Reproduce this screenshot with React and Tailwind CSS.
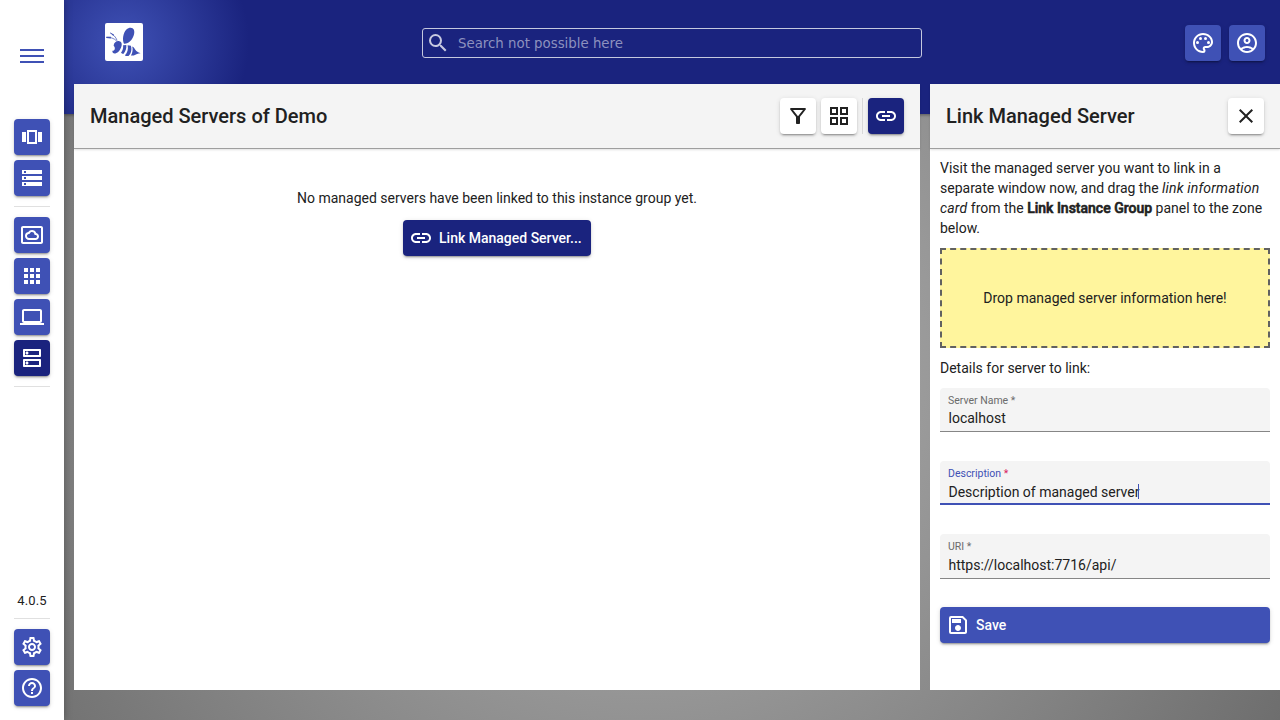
import React from "react";
import {
  MdOutlineViewCarousel, MdStorage, MdOutlineSettingsSystemDaydream, MdApps, MdOutlineComputer,
  MdOutlineDns, MdOutlineSettings, MdHelpOutline, MdSearch, MdOutlineFilterAlt, MdOutlineGridView,
  MdLink, MdOutlinePalette, MdOutlineAccountCircle, MdClose, MdOutlineSave,
} from "react-icons/md";

const shadow = "shadow-[0_3px_1px_-2px_rgba(0,0,0,0.2),0_2px_2px_0_rgba(0,0,0,0.14),0_1px_5px_0_rgba(0,0,0,0.12)]";

const tones = {
  primary: "bg-[#3f51b5] text-white",
  dark: "bg-[#1a237e] text-white",
  light: "bg-white text-[#212121]",
};

function IconButton({ icon: Icon, tone = "primary", label }) {
  return (
    <button aria-label={label} className={`flex size-9 shrink-0 items-center justify-center rounded-[4px] ${tones[tone]} ${shadow}`}>
      <Icon size={24} />
    </button>
  );
}

function Bee() {
  return (
    <svg viewBox="0 0 38 38" className="size-[38px] rounded-[2px] bg-white" fill="#3f51b5">
      <path d="M19 20.8C17.2 17 17.8 10 21.4 6.4c2.6-2.4 6.4-2.4 7.5.3 1.2 3.4-.5 8.2-3.6 11.4-1.8 1.8-4.1 2.9-6.3 2.7z" />
      <path d="M8.6 22.4C9 19.4 11.2 17.8 13.6 17.9c2.6.2 3.6 2.4 3 4.8-.7 3.6-3.3 7-6.2 7.7-2 .4-3.3-.9-3-2.6 1-.1 2-.6 2.3-1.6.4-1.3-.1-2.6-1.1-3.8z" />
      <path d="M18.1 22.2l3.2-.1c.4 3.2-.7 6.5-3 8.8-.9-.1-1.8-.6-2.3-1.2 1.7-2.1 2.4-4.6 2.1-7.5zM22.6 22.2l3.3.6c1.2 3.6.2 7.9-2.4 10.2-1.3.1-2.5-.1-3.7-.6 2.7-2.7 3.7-6.4 2.8-10.2zM27.2 23.6l1.7.8c1.2 2.6 3.1 4.7 6.7 5.9-2.6.1-4.6 1.2-6.8 2.2l-2.9.1c1.7-2.7 2.2-6 1.3-9z" />
      <path d="M1.3 14.4c4-.4 7.6.8 10.4 3.6M5 9.9c3.4 1.6 5.9 4.1 7.1 7.6" fill="none" stroke="#3f51b5" strokeWidth=".7" />
      <path d="M1.4 13.7l4.6.1-.2 1.6-4.5-.3zM5.2 9.4l3.9 2.3-.9 1.4z" />
    </svg>
  );
}

function Field({ label, value, focused }) {
  return (
    <div className={`mb-[28.85px] flex h-[44.3px] flex-col rounded-t-[4px] bg-[#f4f4f4] px-2 pt-[6px] ${focused ? "border-b-2 border-[#3f51b5]" : "border-b border-[#868686]"}`}>
      <div className={`text-[10.5px] leading-[13px] ${focused ? "text-[#3f51b5]" : "text-[#6b6b6b]"}`}>
        {label} <span className={focused ? "text-[#d81b60]" : ""}>*</span>
      </div>
      <div className="mt-[1.4px] flex items-center pl-[0.5px] text-sm leading-5">
        <span>{value}</span>
        {focused && <span className="-ml-[1.5px] h-[15px] w-px bg-[#3f51b5]" />}
      </div>
    </div>
  );
}

export default function App() {
  return (
    <div className="flex h-[720px] w-[1280px] overflow-hidden bg-[radial-gradient(circle_at_center,#b6b6b6_0%,#6e6e6e_100%)] font-['Roboto',sans-serif] text-sm text-[#212121]">
      <aside className="z-10 flex w-16 shrink-0 flex-col items-center bg-white pb-[14px] shadow-[0_0_8px_rgba(0,0,0,0.3)]">
        <div className="mt-[49px] flex w-6 flex-col gap-1">
          <span className="h-0.5 bg-[#3f51b5]" />
          <span className="h-0.5 bg-[#3f51b5]" />
          <span className="h-0.5 bg-[#3f51b5]" />
        </div>
        <nav className="mt-14 flex flex-col gap-[5px]">
          <IconButton icon={MdOutlineViewCarousel} label="Groups" />
          <IconButton icon={MdStorage} label="Repositories" />
          <div className="my-[5px] h-px bg-[#e0e0e0]" />
          <IconButton icon={MdOutlineSettingsSystemDaydream} label="Instances" />
          <IconButton icon={MdApps} label="Apps" />
          <IconButton icon={MdOutlineComputer} label="Clients" />
          <IconButton icon={MdOutlineDns} tone="dark" label="Servers" />
          <div className="mt-[5px] h-px bg-[#e0e0e0]" />
        </nav>
        <div className="mt-auto flex flex-col">
          <div className="text-center text-[13px] leading-4 tracking-[0.15px]">4.0.5</div>
          <div className="mt-[9px] mb-[10px] h-px bg-[#e0e0e0]" />
          <div className="flex flex-col gap-[5px]">
            <IconButton icon={MdOutlineSettings} label="Settings" />
            <IconButton icon={MdHelpOutline} label="Help" />
          </div>
        </div>
      </aside>

      <div className="flex min-w-0 flex-1 flex-col">
        <header className="flex h-[114px] shrink-0 items-start bg-[#1a237e] bg-[radial-gradient(circle_at_60px_42px,#3f51b5_0px,#1a237e_125px)] pr-[15px] pl-[41px] shadow-[0_1px_3px_rgba(0,0,0,0.4)]">
          <div className="mt-[23px]"><Bee /></div>
          <div className="mt-7 ml-[279px] flex h-[30px] w-[500px] items-center rounded-[3px] border border-[#c5c8de] pl-[3px]">
            <MdSearch size={24} className="text-[#c8cae0]" />
            <span className="ml-2 pt-[2px] font-['DejaVu_Sans',sans-serif] text-[13.333px] leading-5 text-[#8d91be]">Search not possible here</span>
          </div>
          <div className="mt-[25px] ml-auto flex gap-2">
            <IconButton icon={MdOutlinePalette} label="Theme" />
            <IconButton icon={MdOutlineAccountCircle} label="Account" />
          </div>
        </header>

        <div className="relative -mt-[30px] ml-[10px] flex h-[606px] gap-[10px]">
          <main className="flex w-[846px] flex-col bg-white">
            <div className="flex h-[65px] shrink-0 items-center border-b border-[#9e9e9e] bg-[#f4f4f4] px-4 shadow-[0_1px_2px_rgba(0,0,0,0.12)]">
              <h1 className="flex-1 text-xl font-medium">Managed Servers of Demo</h1>
              <div className="flex items-center gap-[5px]">
                <IconButton icon={MdOutlineFilterAlt} tone="light" label="Filter" />
                <IconButton icon={MdOutlineGridView} tone="light" label="Grid" />
                <div className="h-9 w-px bg-[#d8d8d8]" />
                <IconButton icon={MdLink} tone="dark" label="Link" />
              </div>
            </div>
            <div className="flex flex-col items-center pt-[39px]">
              <p className="leading-5">No managed servers have been linked to this instance group yet.</p>
              <button className={`mt-3 flex h-9 w-[188px] items-center rounded-[4px] bg-[#1a237e] pl-[6px] font-medium text-white ${shadow}`}>
                <MdLink size={24} />
                <span className="ml-[6px]">Link Managed Server...</span>
              </button>
            </div>
          </main>

          <section className="flex w-[350px] flex-col bg-white">
            <div className="flex h-[65px] shrink-0 items-center justify-between border-b border-[#9e9e9e] bg-[#f4f4f4] px-4 shadow-[0_1px_2px_rgba(0,0,0,0.12)]">
              <h2 className="text-xl font-medium">Link Managed Server</h2>
              <IconButton icon={MdClose} tone="light" label="Close" />
            </div>
            <div className="flex flex-col px-[10px] pt-[9px]">
              <p className="leading-5">
                Visit the managed server you want to link in a separate window now, and drag the <em className="tracking-[0.17px]">link information card</em> from the <strong className="font-medium [-webkit-text-stroke:0.6px_#212121]">Link Instance Group</strong> panel to the zone below.
              </p>
              <div className="mt-[10px] flex h-[100px] items-center justify-center border-2 border-dashed border-[#616161] bg-[#fff59d]">
                Drop managed server information here!
              </div>
              <p className="my-[10px] leading-5">Details for server to link:</p>
              <Field label="Server Name" value="localhost" />
              <Field label="Description" value="Description of managed server" focused />
              <Field label="URI" value="https://localhost:7716/api/" />
              <button className={`flex h-9 items-center rounded-[4px] bg-[#3f51b5] pl-[6px] font-medium text-white ${shadow}`}>
                <MdOutlineSave size={24} />
                <span className="ml-[6px]">Save</span>
              </button>
            </div>
          </section>
        </div>
      </div>
    </div>
  );
}
